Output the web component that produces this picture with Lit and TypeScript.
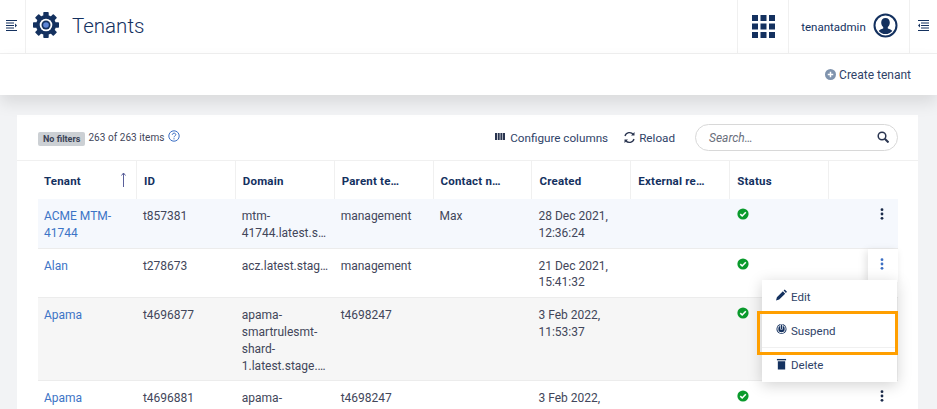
import { LitElement, html, css, svg } from "lit";
import { customElement } from "lit/decorators.js";

const check = html`<svg class="ok" viewBox="0 0 12 12"><circle cx="6" cy="6" r="5.6" fill="#0a9a2c"/><path d="M3.3 6.2 5.2 8 8.8 4.3" fill="none" stroke="#fff" stroke-width="1.6"/></svg>`;
const dots = html`<svg class="dots" viewBox="0 0 4 12"><circle cx="2" cy="1.700" r="1.400"/><circle cx="2" cy="6" r="1.400"/><circle cx="2" cy="10.300" r="1.400"/></svg>`;

interface Row { t: string[]; id: string; d: string[]; p: string; c: string; cr: string[]; cls: string; active?: boolean }
const rows: Row[] = [
  { t: ["ACME MTM-", "41744"], id: "t857381", d: ["mtm-", "41744.latest.s…"], p: "management", c: "Max", cr: ["28 Dec 2021,", "12:36:24"], cls: "blue" },
  { t: ["Alan"], id: "t278673", d: ["acz.latest.stag…"], p: "management", c: "", cr: ["21 Dec 2021,", "15:41:32"], cls: "", active: true },
  { t: ["Apama"], id: "t4696877", d: ["apama-", "smartrulesmt-", "shard-", "1.latest.stage.…"], p: "t4698247", c: "", cr: ["3 Feb 2022,", "11:53:37"], cls: "grey" },
  { t: ["Apama"], id: "t4696881", d: ["apama-"], p: "t4698247", c: "", cr: ["3 Feb 2022,"], cls: "" },
];
const heads = ["Tenant", "ID", "Domain", "Parent te…", "Contact n…", "Created", "External re…", "Status", ""];

const gear = svg`<g fill="#14315f">${[0, 45, 90, 135].map((a) => svg`<rect x="10.300" y="0" width="5.400" height="26" rx=".8" transform="rotate(${a} 13 13)"/>`)}<circle cx="13" cy="13" r="10"/></g><circle cx="13" cy="13" r="6.300" fill="#fff"/><circle cx="13" cy="13" r="4.500" fill="#14315f"/><circle cx="13" cy="13" r="2.800" fill="#5f87d6"/>`;

@customElement("app-root")
export class AppRoot extends LitElement {
  static styles = css`
    :host { display: block; width: 937px; height: 409px; overflow: hidden; background: #f2f3f5; font-family: Roboto, "Liberation Sans", sans-serif; font-size: 12px; color: #42465a; position: relative; }
    * { box-sizing: border-box; }
    .top { height: 54px; background: #fff; border-bottom: 1px solid #f0f0f0; display: flex; align-items: stretch; }
    .cell { display: flex; align-items: center; justify-content: center; border-right: 1px solid #f0f0f0; }
    .cell.l { border-left: 1px solid #f0f0f0; border-right: none; }
    .burger { width: 26px; padding: 0 3px 3px 0; }
    .burger svg, .burger2 svg { width: 13px; height: 13px; }
    .title { display: flex; align-items: center; flex: 1; padding-left: 7px; gap: 13px; }
    .title svg { width: 26px; height: 26px; margin-bottom: 3px; }
    .title span { font-size: 20.500px; font-weight: 300; color: #14315f; margin-bottom: 2px; }
    .apps { width: 51px; }
    .apps svg { width: 23px; height: 23px; }
    .user { width: 122px; gap: 7px; border-left: 1px solid #f0f0f0; border-right: 1px solid #f0f0f0; font-size: 11.500px; color: #14315f; padding-left: 1px; }
    .user svg { width: 25px; height: 25px; margin-bottom: 2px; }
    .burger2 { width: 27px; padding-bottom: 3px; border-right: none; }
    .actions { height: 41px; background: #fff; display: flex; align-items: center; justify-content: flex-end; padding: 0 26px 0 0; gap: 3px; box-shadow: 0 8px 16px rgba(0,0,0,.1); position: relative; color: #2f4368; font-size: 12px; }
    .actions svg { width: 11px; height: 11px; }
    .card { background: #fff; margin: 20px 19px 0 17px; height: 320px; }
    .tools { height: 46px; display: flex; align-items: center; padding: 0 20px 0 21px; border-bottom: 1px solid #f0f0f0; }
    .badge { background: #ccd0d4; color: #3a4256; font-size: 9px; font-weight: 700; border-radius: 2px; padding: 0 5px; height: 14px; line-height: 14px; margin-right: 3px; margin-top: 2px; }
    .count { font-size: 10px; color: #42465a; letter-spacing: .05px; }
    .help { width: 12px; height: 12px; margin-left: 4px; margin-bottom: 3px; }
    .sp { flex: 1; }
    .tool { display: flex; align-items: center; gap: 5px; color: #2f4368; font-size: 11.700px; margin-right: 15px; }
    .tool svg { width: 10px; height: 10px; margin-bottom: 2px; }
    .tool .r { width: 13px; height: 13px; margin-bottom: 0; }
    .tool.last { margin-right: 20px; gap: 3px; }
    .search { width: 203px; height: 27px; border: 1px solid #d8d8d8; border-radius: 14px; display: flex; align-items: center; padding: 0 8px 0 13px; font-style: italic; color: #6a6f7c; font-size: 12px; justify-content: space-between; }
    .search svg { width: 12px; height: 12px; margin-bottom: 2px; }
    .table { margin: 0 20px 0 21px; }
    .tr { display: grid; grid-template-columns: repeat(8, 98.900px) 1fr; }
    .th { height: 38.200px; border-right: 1px solid #f0f0f0; padding: 1px 7px 0; display: flex; align-items: center; justify-content: space-between; font-weight: 700; font-size: 11.500px; color: #14315f; letter-spacing: .2px; }
    .th:first-child { padding-left: 6px; padding-right: 9px; }
    .th:last-child { border-right: none; }
    .th svg { width: 7px; height: 15px; margin-bottom: 3px; }
    .row { border-bottom: 1px solid #ececec; position: relative; }
    .row.blue { background: #f5f8fd; }
    .row.grey { background: #f6f6f6; }
    .td { padding: 9px 6px 5.900px; line-height: 16.800px; color: #42465a; min-width: 0; white-space: nowrap; }
    .td:first-child { color: #3c74c6; }
    .td.st { padding-left: 7px; }
    .ok { width: 12px; height: 12px; display: block; }
    .acts { text-align: right; position: relative; padding-right: 14px; }
    .dots { width: 4px; height: 12px; fill: #1a2a4a; display: inline-block; vertical-align: top; position: relative; }
    .active .acts::before { content: ""; position: absolute; right: 0; top: 0; width: 30px; height: 33px; background: #fff; box-shadow: -2px 2px 8px rgba(0,0,0,.12); }
    .active .dots { fill: #3c6fc4; }
    .menu { position: absolute; left: 762px; top: 280px; width: 135px; height: 102px; background: #fff; box-shadow: 0 3px 14px rgba(0,0,0,.18); color: #2f4368; font-size: 11.500px; }
    .item { height: 34px; display: flex; align-items: center; gap: 4px; padding-left: 14px; border-bottom: 1px solid #f0f0f0; }
    .item:last-child { border-bottom: none; }
    .item svg { width: 11px; height: 12px; margin-bottom: 3px; }
    .hl { position: absolute; left: 757px; top: 311px; width: 141px; height: 44px; border: 3px solid #ff9f00; }
  `;

  render() {
    return html`
      <div class="top">
        <div class="cell burger"><svg viewBox="0 0 13 13" fill="none" stroke="#14315f" stroke-width="1.200"><path d="M1 1.500h11M1 4h8M1 6.500h8M1 9h8M1 11.500h11"/><path d="M10 4.500l2 2-2 2z" fill="#14315f" stroke="none"/></svg></div>
        <div class="title"><svg viewBox="0 0 26 26">${gear}</svg><span>Tenants</span></div>
        <div class="cell apps l"><svg viewBox="0 0 23 23" fill="#14315f">${[0, 8.5, 17].flatMap((y) => [0, 8.5, 17].map((x) => svg`<rect x=${x} y=${y} width="6" height="6"/>`))}</svg></div>
        <div class="cell user"><span>tenantadmin</span><svg viewBox="0 0 25 25"><circle cx="12.500" cy="12.500" r="11" fill="#fff" stroke="#14315f" stroke-width="2"/><path fill="#14315f" d="M12.500 5c2.700 0 4.300 2 4.300 4.600 0 2-.9 3.600-2 4.500v1.400c2 .7 3.800 1.300 4.500 2.500a9 9 0 0 1-13.600 0c.7-1.200 2.500-1.800 4.500-2.500v-1.400c-1.100-.9-2-2.500-2-4.500C8.200 7 9.800 5 12.500 5z"/></svg></div>
        <div class="cell burger2"><svg viewBox="0 0 13 13" fill="none" stroke="#14315f" stroke-width="1.200"><path d="M1 1.500h11M4 4h8M4 6.500h8M4 9h8M1 11.500h11"/><path d="M3 4.500l-2 2 2 2z" fill="#14315f" stroke="none"/></svg></div>
      </div>
      <div class="actions"><svg viewBox="0 0 12 12"><circle cx="6" cy="6" r="6" fill="#7f93ad"/><path d="M6 3v6M3 6h6" stroke="#fff" stroke-width="1.600"/></svg><span>Create tenant</span></div>
      <div class="card">
        <div class="tools">
          <span class="badge">No filters</span><span class="count">263 of 263 items</span>
          <svg class="help" viewBox="0 0 12 12" fill="none" stroke="#3c6fc4"><circle cx="6" cy="6" r="5.200"/><path d="M4.300 4.800c0-2.200 3.500-2.200 3.500-.1 0 1.200-1.800 1.300-1.800 2.600"/><path d="M6 8.200v1.200"/></svg>
          <div class="sp"></div>
          <div class="tool"><svg viewBox="0 0 10 10" fill="#2a3550"><rect x="0" y="1" width="2" height="7"/><rect x="2.700" y="1" width="2" height="7"/><rect x="5.400" y="1" width="2" height="7"/><rect x="8" y="1" width="2" height="7"/></svg>Configure columns</div>
          <div class="tool last"><svg class="r" viewBox="0 0 13 13" fill="none" stroke="#2a3550" stroke-width="1.300"><path d="M2 5a4.700 4.700 0 0 1 8.300-1.500"/><path d="M11 8a4.700 4.700 0 0 1-8.300 1.500"/><path d="M11.500 1v3.500H8z M1.500 12V8.500H5z" fill="#2a3550" stroke="none"/></svg>Reload</div>
          <div class="search"><span>Search…</span><svg viewBox="0 0 12 12" fill="none" stroke="#2a3550" stroke-width="1.500"><circle cx="5" cy="5" r="3.800"/><path d="M7.800 7.800 11.500 11.500" stroke-width="2"/></svg></div>
        </div>
        <div class="table">
          <div class="tr">${heads.map((h, i) => html`<div class="th"><span>${h}</span>${i === 0 ? html`<svg viewBox="0 0 7 15" fill="none" stroke="#5a5f9a"><path d="M3.500 1v14M1.500 3.500l2-2.500 2 2.500"/></svg>` : ""}</div>`)}</div>
          ${rows.map((r) => html`<div class="tr row ${r.cls} ${r.active ? "active" : ""}">
            <div class="td">${r.t.map((l) => html`<div>${l}</div>`)}</div>
            <div class="td">${r.id}</div>
            <div class="td">${r.d.map((l) => html`<div>${l}</div>`)}</div>
            <div class="td">${r.p}</div>
            <div class="td">${r.c}</div>
            <div class="td">${r.cr.map((l) => html`<div>${l}</div>`)}</div>
            <div class="td"></div>
            <div class="td st">${check}</div>
            <div class="td acts">${dots}</div>
          </div>`)}
        </div>
      </div>
      <div class="menu">
        <div class="item"><svg viewBox="0 0 12 12" fill="#14315f"><path d="M0 12l1-3.500L7.500 2 10 4.500 3.500 11zM8.300 1.200 9.500 0 12 2.500 10.800 3.700z"/></svg>Edit</div>
        <div class="item"><svg viewBox="0 0 12 12"><circle cx="6" cy="6" r="5.500" fill="#14315f"/><circle cx="6" cy="6" r="4.500" fill="#fff"/><circle cx="6" cy="6" r="3.500" fill="#14315f"/><rect x="4.600" y="1" width="2.800" height="5.500" fill="#fff"/><rect x="5.300" y="1.500" width="1.400" height="4.500" fill="#14315f"/></svg>Suspend</div>
        <div class="item"><svg viewBox="0 0 12 12" fill="#14315f"><rect x="1" y=".5" width="10" height="1.500"/><rect x="2" y="3" width="8" height="9"/></svg>Delete</div>
      </div>
      <div class="hl"></div>
    `;
  }
}
